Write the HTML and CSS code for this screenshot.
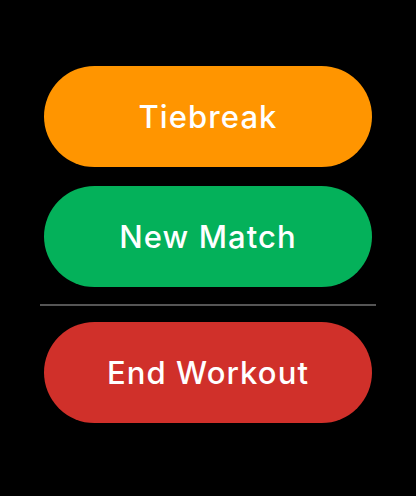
FILE: index.html
```html
<!DOCTYPE html>
<html>
<head>
<meta charset="utf-8">
<link rel="stylesheet" href="styles.css">
</head>
<body>
<div class="screen">
  <button class="pill pill-orange">Tiebreak</button>
  <button class="pill pill-green">New Match</button>
  <div class="divider"></div>
  <button class="pill pill-red">End Workout</button>
</div>
</body>
</html>
```
FILE: styles.css
```css
html, body {
  margin: 0;
  padding: 0;
  background: #000;
  width: 416px;
  height: 496px;
  overflow: hidden;
}
.screen {
  display: flex;
  flex-direction: column;
  align-items: center;
  padding-top: 66px;
}
.pill {
  width: 328px;
  height: 101px;
  border: none;
  border-radius: 51px;
  color: #fff;
  font-family: Inter, "Noto Sans", sans-serif;
  font-size: 31px;
  font-weight: 550;
  letter-spacing: 1.1px;
  padding: 0;
  display: flex;
  align-items: center;
  justify-content: center;
}
.pill-orange { background: #ff9500; }
.pill-green { background: #04b15a; margin-top: 19px; }
.pill-red { background: #d0302a; }
.divider {
  width: 336px;
  height: 2px;
  background: #555;
  margin: 17px 0 16px;
}
```
